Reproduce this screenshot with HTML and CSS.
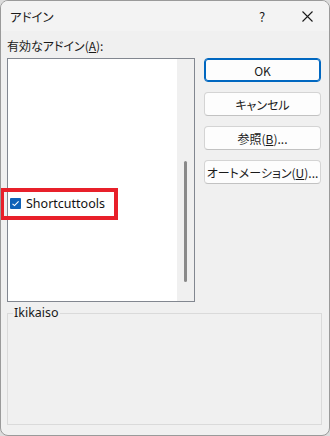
FILE: index.html
```html
<!DOCTYPE html>
<html lang="ja">
<head>
<meta charset="utf-8">
<link rel="stylesheet" href="styles.css">
</head>
<body>
<div class="window">
  <div class="titlebar">
    <span class="title">アドイン</span>
    <span class="help">?</span>
    <span class="close">
      <svg width="11" height="11" viewBox="0 0 11 11"><path d="M0.5 0.5 L10.5 10.5 M10.5 0.5 L0.5 10.5" stroke="#1a1a1a" stroke-width="1.1" fill="none"/></svg>
    </span>
  </div>
  <div class="content">
    <div class="main">
      <div class="label">有効なアドイン(<u>A</u>):</div>
      <div class="listbox">
        <div class="items">
          <div class="item">
            <span class="check">
              <svg width="11" height="11" viewBox="0 0 11 11"><path d="M2.5 5.8 L4.5 7.6 L8.6 3.4" stroke="#fff" stroke-width="1.1" fill="none"/></svg>
            </span>
            <span class="item-text">Shortcuttools</span>
          </div>
        </div>
        <div class="scrollbar"><div class="thumb"></div></div>
      </div>
      <div class="buttons">
        <button class="btn default">OK</button>
        <button class="btn">キャンセル</button>
        <button class="btn">参照(<u>B</u>)...</button>
        <button class="btn">オートメーション(<u>U</u>)...</button>
      </div>
    </div>
    <fieldset class="group">
      <legend>Ikikaiso</legend>
    </fieldset>
  </div>
  <div class="highlight"></div>
</div>
</body>
</html>
```

FILE: styles.css
```css
* { box-sizing: border-box; }
html, body { margin: 0; padding: 0; }
body {
  width: 330px;
  height: 436px;
  background: #dcdcdc;
  font-family: "Noto Sans CJK JP", "Noto Sans", sans-serif;
  font-feature-settings: "palt";
  font-size: 12px;
  color: #1a1a1a;
}
.window {
  position: relative;
  width: 330px;
  height: 436px;
  background: #f0f0f0;
  border: 1px solid #9a9a9a;
  border-radius: 8px;
  overflow: hidden;
  display: flex;
  flex-direction: column;
}
.titlebar {
  height: 30px;
  flex: none;
  background: #f3f3f3;
  display: flex;
  align-items: center;
  padding-left: 9px;
}
.title { flex: 1; font-size: 12.5px; }
.help { width: 20px; text-align: center; font-size: 13px; margin-right: 30px; }
.close { width: 11px; height: 11px; display: flex; margin-right: 16px; }
.content {
  flex: 1;
  display: flex;
  flex-direction: column;
  padding: 0 0 0 6px;
}
.main {
  display: grid;
  grid-template-columns: 188px 117px;
  grid-template-rows: 27px 244px;
  column-gap: 9px;
}
.label {
  grid-column: 1;
  grid-row: 1;
  align-self: center;
  padding-top: 3px;
  line-height: 16px;
}
.listbox {
  grid-column: 1;
  grid-row: 2;
  border: 1px solid #828790;
  display: flex;
  background: #fff;
}
.items {
  flex: 1;
  padding-top: 136px;
  padding-left: 2px;
}
.item {
  display: flex;
  align-items: center;
  height: 16px;
  gap: 5px;
}
.check {
  width: 11px;
  height: 11px;
  background: #0f62b8;
  border-radius: 1px;
  display: flex;
}
.item-text {
  font-family: "Noto Sans", sans-serif;
  font-size: 12.5px;
  color: #111;
}
.scrollbar {
  width: 17px;
  flex: none;
  background: #f0f0f0;
  padding: 102px 0 0 7px;
}
.thumb {
  width: 3px;
  height: 121px;
  background: #8a8a8a;
  border-radius: 1.5px;
}
.buttons {
  grid-column: 2;
  grid-row: 2;
  display: flex;
  flex-direction: column;
  gap: 10px;
}
.btn {
  height: 24px;
  width: 117px;
  background: #fdfdfd;
  border: 1px solid #d4d4d4;
  border-bottom-color: #c2c2c2;
  border-radius: 4px;
  font: inherit;
  font-size: 12px;
  color: #1a1a1a;
  padding: 0;
}
.btn.default {
  border-color: #0067c0;
  box-shadow: inset 0 0 0 1px #0067c0;
}
.group {
  margin: 3px 0 0 0;
  width: 315px;
  height: 120px;
  border: 1px solid #dadada;
  padding: 0;
}
.group legend {
  margin-left: 5px;
  padding: 0 1px;
  line-height: 16px;
  font-family: "Noto Sans", sans-serif;
  font-size: 12.5px;
}
.highlight {
  position: absolute;
  left: -1px;
  top: 187px;
  width: 118px;
  height: 32px;
  border: 4px solid #e8202a;
}
```
